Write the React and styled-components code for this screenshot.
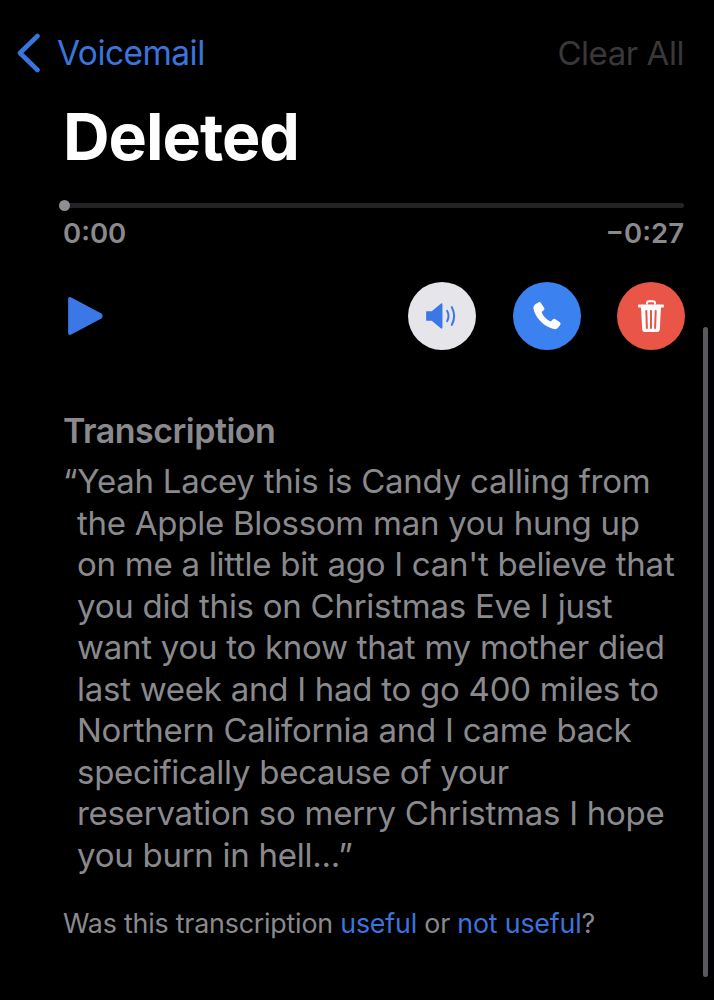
import React from "react";
import styled, { createGlobalStyle } from "styled-components";

const GlobalStyle = createGlobalStyle`
  html, body {
    margin: 0;
    background: #000;
    font-family: Inter, "Liberation Sans", sans-serif;
  }
`;

const Screen = styled.div`
  position: relative;
  width: 714px;
  height: 1000px;
  overflow: hidden;
  background: #000;
  box-sizing: border-box;
  padding: 0 30px 0 63px;
`;

const NavBar = styled.div`
  display: flex;
  align-items: center;
  justify-content: space-between;
  height: 40px;
  margin: 33px 0 0 -47px;
`;

const BackLink = styled.div`
  display: flex;
  align-items: center;
  gap: 16px;
  color: #3a74dc;
  font-size: 33.5px;
  letter-spacing: -0.55px;
`;

const ClearAll = styled.div`
  color: #38383a;
  font-size: 33px;
  letter-spacing: -0.45px;
`;

const Title = styled.h1`
  margin: 26px 0 0;
  color: #fff;
  font-size: 64.5px;
  line-height: 76px;
  font-weight: 700;
  letter-spacing: -1px;
`;

const Track = styled.div`
  position: relative;
  height: 5px;
  margin-top: 28px;
  border-radius: 3px;
  background: #232325;
`;

const Thumb = styled.div`
  position: absolute;
  left: -4px;
  top: -3px;
  width: 11px;
  height: 11px;
  border-radius: 50%;
  background: #8e8e93;
`;

const Times = styled.div`
  display: flex;
  justify-content: space-between;
  margin-top: 8px;
  color: #8a8a8e;
  font-size: 27.5px;
  line-height: 34px;
  font-weight: 600;
`;

const Controls = styled.div`
  display: flex;
  align-items: center;
  margin-top: 32px;
  margin-right: -1px;
`;

const Play = styled.div`
  display: flex;
  margin-left: 3px;
  margin-right: auto;
`;

const Round = styled.div`
  display: flex;
  align-items: center;
  justify-content: center;
  width: 68px;
  height: 68px;
  margin-left: ${(p) => p.$gap || 0}px;
  border-radius: 50%;
  background: ${(p) => p.$bg};
`;

const Heading = styled.div`
  margin-top: 60px;
  color: #8a8a8e;
  font-size: 34px;
  line-height: 42px;
  font-weight: 600;
  letter-spacing: -0.5px;
`;

const Transcript = styled.p`
  margin: 9px 0 0;
  padding-left: 14px;
  color: #8a8a8e;
  font-size: 33px;
  line-height: 41.5px;
  letter-spacing: -0.26px;
`;

const Line = styled.span`
  display: block;
  white-space: nowrap;
  &:first-child {
    text-indent: -14px;
  }
`;

const Feedback = styled.div`
  margin-top: 30px;
  color: #8a8a8e;
  font-size: 26.8px;
  line-height: 34px;
  letter-spacing: -0.2px;
`;

const Link = styled.span`
  color: #3a74dc;
`;

const Scrollbar = styled.div`
  position: absolute;
  left: 703px;
  top: 327px;
  width: 5px;
  height: 650px;
  border-radius: 3px;
  background: #5a5a5e;
`;

const lines = [
  "“Yeah Lacey this is Candy calling from",
  "the Apple Blossom man you hung up",
  "on me a little bit ago I can't believe that",
  "you did this on Christmas Eve I just",
  "want you to know that my mother died",
  "last week and I had to go 400 miles to",
  "Northern California and I came back",
  "specifically because of your",
  "reservation so merry Christmas I hope",
  "you burn in hell...”",
];

const Chevron = () => (
  <svg width="25" height="40" viewBox="0 0 25 40">
    <path d="M21.5 3 L4 20 L21.5 37" fill="none" stroke="#3a74dc" strokeWidth="4.6" strokeLinecap="round" strokeLinejoin="round" />
  </svg>
);

const PlayIcon = () => (
  <svg width="38" height="40" viewBox="0 0 36 40" preserveAspectRatio="none">
    <path d="M2 3 Q2 0 5 1.4 L33.5 17.6 Q36 20 33.5 22.4 L5 38.6 Q2 40 2 37 Z" fill="#3b78e7" />
  </svg>
);

const SpeakerIcon = () => (
  <svg width="34" height="28" viewBox="0 0 36 30">
    <path d="M1 10 H7 L17 1.5 Q18.5 1 18.5 3 V27 Q18.5 29 17 28.5 L7 20 H1 Z" fill="#3b78e7" />
    <path d="M23.5 9.5 Q26.5 15 23.5 20.5" fill="none" stroke="#3b78e7" strokeWidth="2.2" strokeLinecap="round" />
    <path d="M28.5 5.5 Q33.5 15 28.5 24.5" fill="none" stroke="#3b78e7" strokeWidth="2.2" strokeLinecap="round" />
  </svg>
);

const PhoneIcon = () => (
  <svg width="30" height="30" viewBox="0 0 30 30">
    <path d="M3 3.5 L6.6 1.2 Q8 0.6 8.9 1.9 L12.2 7 Q12.9 8.2 11.8 9.2 L9.6 11 Q10.6 14 13 16.6 Q15.6 19.4 18.8 20.6 L20.8 18.4 Q21.8 17.4 23 18.1 L27.8 21.2 Q29 22.1 28.4 23.4 L26.2 26.6 Q24.6 28.6 21.8 28 Q13.8 26 8.2 20 Q2.8 14 1.4 7.4 Q1.2 5 3 3.5 Z" fill="#fff" />
  </svg>
);

const TrashIcon = () => (
  <svg width="28" height="33" viewBox="0 0 28 33">
    <path d="M10 4.5 V3 Q10 1.2 12 1.2 H16 Q18 1.2 18 3 V4.5" fill="none" stroke="#fff" strokeWidth="2" />
    <rect x="1" y="4.5" width="26" height="3" rx="1" fill="#fff" />
    <path d="M4 7 H24 L22.8 29.5 Q22.6 32 20 32 H8 Q5.4 32 5.2 29.5 Z" fill="#fff" />
    <path d="M9.3 11 L9.9 28 M14 11 V28 M18.7 11 L18.1 28" fill="none" stroke="#e95546" strokeWidth="2" strokeLinecap="round" />
  </svg>
);

const App = () => {
  return (
    <Screen>
      <GlobalStyle />
      <NavBar>
        <BackLink>
          <Chevron />
          <span>Voicemail</span>
        </BackLink>
        <ClearAll>Clear All</ClearAll>
      </NavBar>
      <Title>Deleted</Title>
      <Track>
        <Thumb />
      </Track>
      <Times>
        <span>0:00</span>
        <span>−0:27</span>
      </Times>
      <Controls>
        <Play>
          <PlayIcon />
        </Play>
        <Round $bg="#e5e5ea">
          <SpeakerIcon />
        </Round>
        <Round $bg="#3b82f0" $gap={36.5}>
          <PhoneIcon />
        </Round>
        <Round $bg="#e95546" $gap={36.5}>
          <TrashIcon />
        </Round>
      </Controls>
      <Heading>Transcription</Heading>
      <Transcript>
        {lines.map((line) => (
          <Line key={line}>{line}</Line>
        ))}
      </Transcript>
      <Feedback>
        Was this transcription <Link>useful</Link> or <Link>not useful</Link>?
      </Feedback>
      <Scrollbar />
    </Screen>
  );
};

export default App;
